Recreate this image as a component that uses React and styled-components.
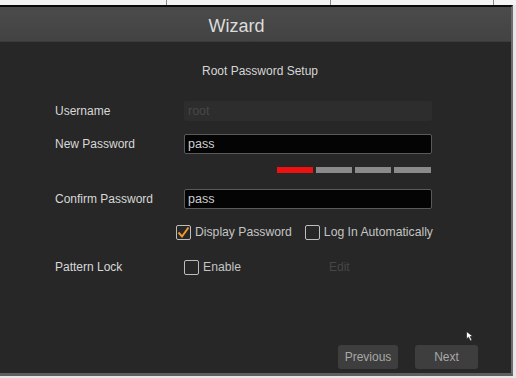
import React, { useState } from "react";
import styled, { createGlobalStyle } from "styled-components";

const Global = createGlobalStyle`
  html, body {
    margin: 0;
    padding: 0;
    background: #e6e6e6;
    font-family: "Liberation Sans", Arial, sans-serif;
  }
`;

const Page = styled.div`
  width: 516px;
  height: 378px;
  overflow: hidden;
  position: relative;
  background: #e6e6e6;
`;

const TopStrip = styled.div`
  display: grid;
  grid-template-columns: 167px 164px 163px 1fr;
  height: 5px;
  background: #f4f4f4;
`;

const StripCell = styled.div`
  border-right: 1px solid #8a8a8a;
  &:last-child { border-right: none; }
`;

const Dialog = styled.div`
  width: 511px;
  height: 366px;
  border-top: 2px solid #0a0a0a;
  border-right: 2px solid #6c6c6c;
  border-bottom: 3px solid #5e5e5e;
  display: flex;
  flex-direction: column;
  background: #262726;
`;

const TitleBar = styled.div`
  height: 35px;
  flex: none;
  display: flex;
  align-items: center;
  justify-content: center;
  background: linear-gradient(#4a4b4a, #424342);
  border-bottom: 1px solid #3a3a3a;
  color: #dcdcdc;
  font-size: 18px;
  padding-right: 38px;
  padding-top: 5px;
  box-sizing: border-box;
`;

const Body = styled.div`
  flex: 1;
  display: flex;
  flex-direction: column;
  padding: 22px 33px 4px 0;
`;

const Subtitle = styled.div`
  text-align: center;
  font-size: 12px;
  line-height: 14px;
  color: #d6d6d6;
  padding-left: 42px;
`;

const Row = styled.div`
  display: flex;
  align-items: center;
  height: ${({ $h }) => $h || 20}px;
  margin-top: ${({ $mt }) => $mt}px;
  padding-left: ${({ $pl }) => $pl ?? 55}px;
`;

const Label = styled.div`
  width: 129px;
  flex: none;
  font-size: 12px;
  color: #d8d8d8;
`;

const Field = styled.div`
  width: 248px;
  height: 20px;
  box-sizing: border-box;
  display: flex;
  align-items: center;
  padding-left: 3px;
  font-size: 12.5px;
  border-radius: 2px;
  background: ${({ $disabled }) => ($disabled ? "#2d2d2d" : "#040404")};
  border: 1px solid ${({ $disabled }) => ($disabled ? "#2d2d2d" : "#5a5a5a")};
  color: ${({ $disabled }) => ($disabled ? "#474747" : "#cfcfcf")};
`;

const Strength = styled.div`
  display: flex;
  gap: 3px;
  height: 6px;
  margin-top: 13px;
  padding-left: 277px;
`;

const Seg = styled.div`
  width: ${({ $w }) => $w}px;
  height: 6px;
  background: ${({ $on }) => ($on ? "#ee1111" : "#8a8a8a")};
`;

const Check = styled.label`
  display: flex;
  align-items: center;
  gap: 4px;
  font-size: 12.2px;
  color: ${({ $dim }) => ($dim ? "#4a4a4a" : "#c4c4c4")};
  margin-right: ${({ $mr }) => $mr || 0}px;
  cursor: pointer;
`;

const Box = styled.span`
  width: 15px;
  height: 15px;
  box-sizing: border-box;
  border: 1.5px solid #bdbdbd;
  border-radius: 2px;
  display: flex;
  align-items: center;
  justify-content: center;
`;

const Dim = styled.span`
  font-size: 12px;
  color: #464646;
`;

const Footer = styled.div`
  margin-top: auto;
  display: flex;
  justify-content: flex-end;
  gap: 17px;
`;

const Button = styled.button`
  width: ${({ $w }) => $w}px;
  height: 24px;
  border: none;
  border-radius: 3px;
  background: #3d3e3d;
  color: #a8a8a8;
  font-family: "Liberation Sans", Arial, sans-serif;
  font-size: 12px;
  padding: 0;
  cursor: pointer;
`;

const Cursor = styled.svg`
  position: absolute;
  left: 466px;
  top: 331px;
`;

function CheckBox({ checked, onToggle, children, mr }) {
  return (
    <Check $mr={mr} onClick={onToggle}>
      <Box>
        {checked && (
          <svg width="13" height="13" viewBox="0 0 13 13">
            <path d="M1.5 6.5 L5 10.5 L11.5 1.5" fill="none" stroke="#f09a2a" strokeWidth="2" />
          </svg>
        )}
      </Box>
      {children}
    </Check>
  );
}

export default function App() {
  const [display, setDisplay] = useState(true);
  const [auto, setAuto] = useState(false);
  const [lock, setLock] = useState(false);

  return (
    <Page>
      <Global />
      <TopStrip>
        <StripCell />
        <StripCell />
        <StripCell />
        <StripCell />
      </TopStrip>
      <Dialog>
        <TitleBar>Wizard</TitleBar>
        <Body>
          <Subtitle>Root Password Setup</Subtitle>
          <Row $mt={23}>
            <Label>Username</Label>
            <Field $disabled>root</Field>
          </Row>
          <Row $mt={13}>
            <Label>New Password</Label>
            <Field>pass</Field>
          </Row>
          <Strength>
            <Seg $on $w={36} />
            <Seg $w={36} />
            <Seg $w={36} />
            <Seg $w={37} />
          </Strength>
          <Row $mt={16}>
            <Label>Confirm Password</Label>
            <Field>pass</Field>
          </Row>
          <Row $mt={15} $h={16} $pl={176}>
            <CheckBox checked={display} onToggle={() => setDisplay(!display)} mr={13}>
              Display Password
            </CheckBox>
            <CheckBox checked={auto} onToggle={() => setAuto(!auto)}>
              Log In Automatically
            </CheckBox>
          </Row>
          <Row $mt={19} $h={16}>
            <Label>Pattern Lock</Label>
            <CheckBox checked={lock} onToggle={() => setLock(!lock)} mr={88}>
              Enable
            </CheckBox>
            <Dim>Edit</Dim>
          </Row>
          <Footer>
            <Button $w={60}>Previous</Button>
            <Button $w={63}>Next</Button>
          </Footer>
        </Body>
      </Dialog>
      <Cursor width="9" height="11" viewBox="0 0 9 11">
        <path d="M0.5 0.5 L0.5 8 L2.5 6.2 L4.5 10 L6 9.2 L4.2 5.6 L7 5.4 Z" fill="#fff" stroke="#222" strokeWidth="0.7" />
      </Cursor>
    </Page>
  );
}
